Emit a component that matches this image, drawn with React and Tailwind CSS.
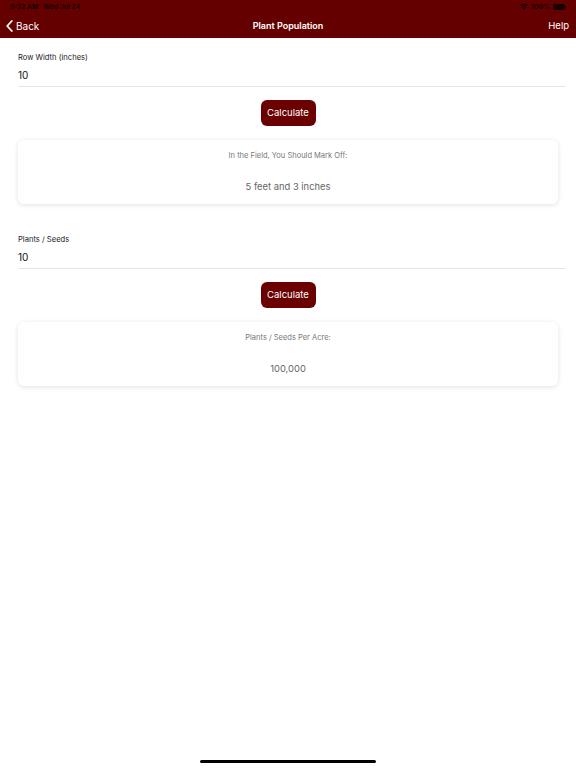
import React from 'react';

function Field({ label, value }) {
  return (
    <div className="flex flex-col">
      <label className="text-[7.6px] leading-[10px] text-[#222] pt-px">{label}</label>
      <div className="mt-[5px] text-[10px] leading-[14px] text-[#111] pb-[4px] border-b border-[#e6e6e6] mr-[-8px]">
        {value}
      </div>
    </div>
  );
}

function ResultCard({ title, result }) {
  return (
    <div className="h-[64px] bg-white rounded-[6px] shadow-[0_1px_5px_rgba(0,0,0,0.12)] flex flex-col items-center">
      <div className="mt-[11px] text-[7.5px] leading-[10px] text-[#777]">{title}</div>
      <div className="mt-[20px] text-[9.4px] leading-[12px] text-[#666]">{result}</div>
    </div>
  );
}

function Section({ label, value, title, result }) {
  return (
    <div className="flex flex-col">
      <Field label={label} value={value} />
      <button className="self-center mt-[13px] h-[26px] w-[55px] rounded-[6px] bg-[#6a0000] text-white text-[9.5px]">
        Calculate
      </button>
      <div className="mt-[14px]">
        <ResultCard title={title} result={result} />
      </div>
    </div>
  );
}

export default function App() {
  return (
    <div className="relative w-[576px] h-[768px] bg-white overflow-hidden" style={{ fontFamily: 'Inter, "Liberation Sans", sans-serif' }}>
      {/* --- HEADER --- */}
      <header className="h-[38px] bg-[#650000] flex flex-col">
        <div className="h-[14px] flex items-center justify-between px-[10px] text-[6.8px] font-bold text-[#1a0000]">
          <span>9:32 AM&nbsp;&nbsp;&nbsp;Wed Jul 24</span>
          <div className="flex items-center gap-[3px]">
            <svg width="8" height="6" viewBox="0 0 16 12" fill="#1a0000">
              <path d="M8 12 L5 8.5 A4.5 4.5 0 0 1 11 8.5 Z M2.8 6 A7.5 7.5 0 0 1 13.2 6 L12 7.4 A5.8 5.8 0 0 0 4 7.4 Z M0 3 A11.5 11.5 0 0 1 16 3 L14.7 4.5 A9.6 9.6 0 0 0 1.3 4.5 Z" />
            </svg>
            <span>100%</span>
            <div className="flex items-center">
              <div className="w-[12px] h-[6px] rounded-[1.5px] bg-[#1a0000]" />
              <div className="w-[1px] h-[2px] bg-[#1a0000]" />
            </div>
          </div>
        </div>
        <div className="flex-1 flex items-center justify-between pl-[6px] pr-[7px] relative">
          <div className="flex items-center gap-[3px] text-white text-[10px]">
            <svg width="7" height="12" viewBox="0 0 7 12" fill="none" stroke="white" strokeWidth="1.8" strokeLinecap="round" strokeLinejoin="round">
              <path d="M5.8 1 L1.2 6 L5.8 11" />
            </svg>
            <span>Back</span>
          </div>
          <span className="absolute left-1/2 -translate-x-1/2 text-white text-[9px] font-semibold">Plant Population</span>
          <span className="text-white text-[9.5px]">Help</span>
        </div>
      </header>

      {/* --- MAIN CONTENT --- */}
      <main className="px-[18px] pt-[14px] flex flex-col gap-[30px]">
        <Section
          label="Row Width (inches)"
          value="10"
          title="In the Field, You Should Mark Off:"
          result="5 feet and 3 inches"
        />
        <Section
          label="Plants / Seeds"
          value="10"
          title="Plants / Seeds Per Acre:"
          result="100,000"
        />
      </main>

      {/* home indicator */}
      <div className="absolute bottom-[5px] left-1/2 -translate-x-1/2 w-[176px] h-[3px] rounded-full bg-black" />
    </div>
  );
}
